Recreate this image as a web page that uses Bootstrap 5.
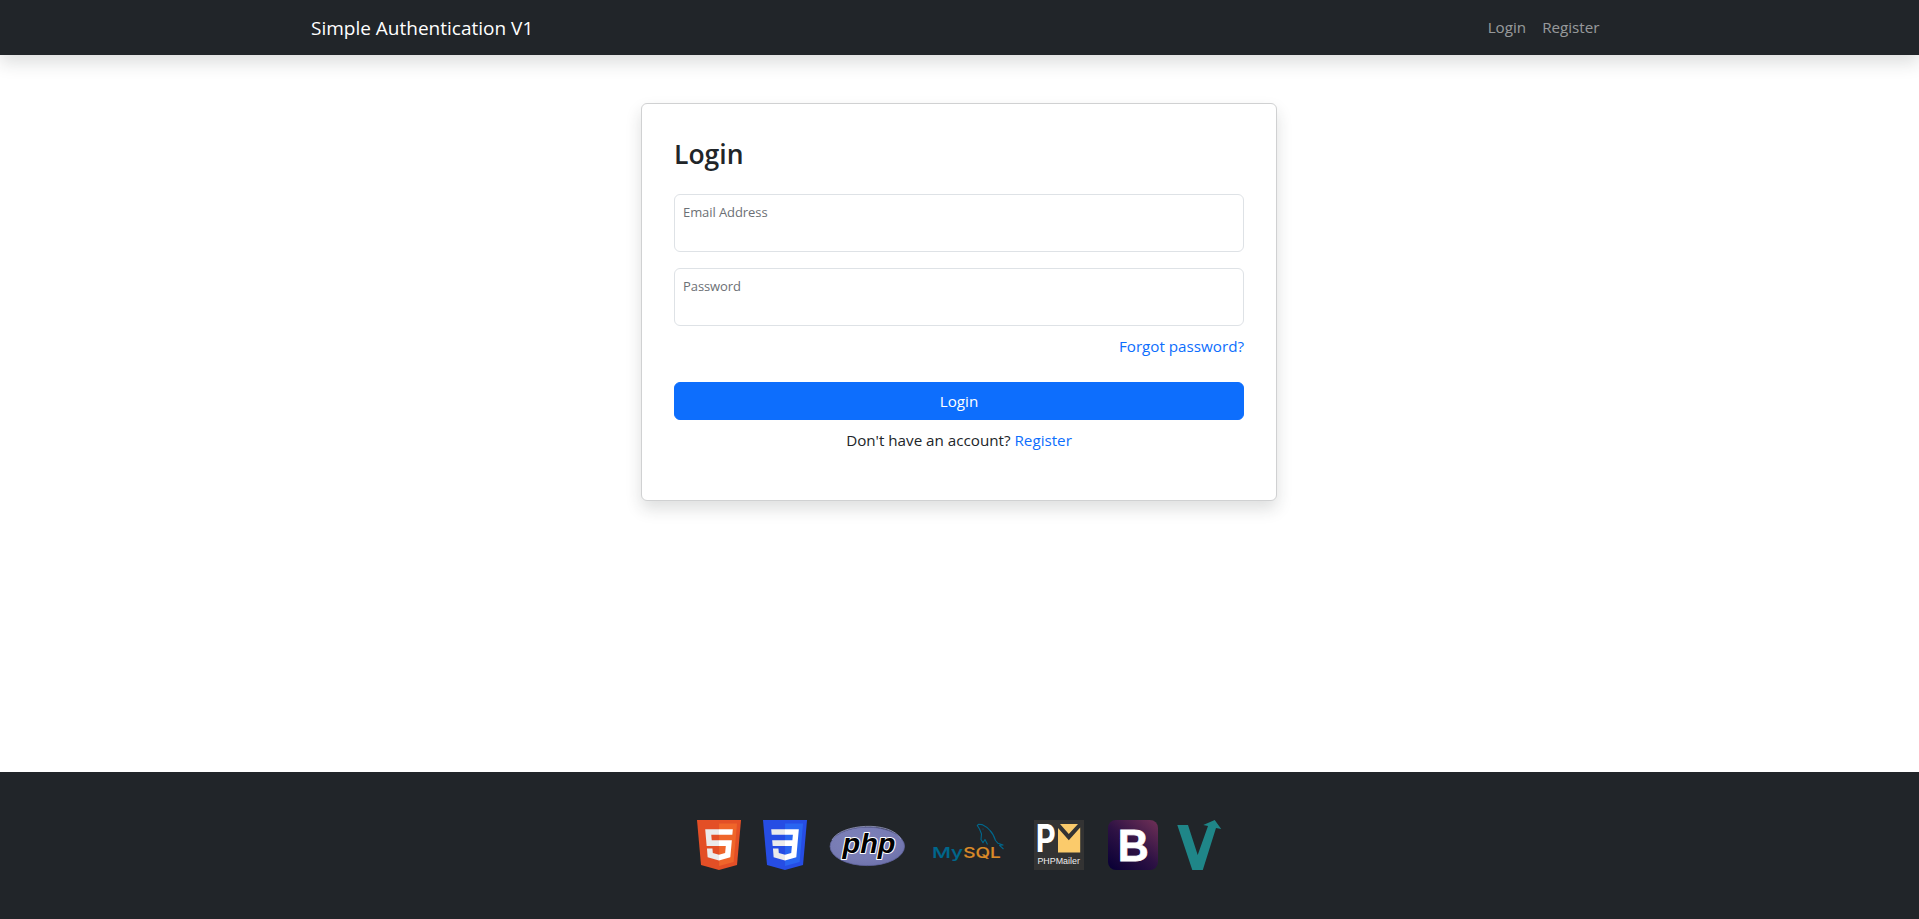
<!DOCTYPE html>
<html lang="en">
<head>
<meta charset="utf-8">
<meta name="viewport" content="width=device-width, initial-scale=1">
<title>Simple Authentication V1</title>
<link href="https://cdn.jsdelivr.net/npm/bootstrap@5.3.0/dist/css/bootstrap.min.css" rel="stylesheet">
<style>
  body { font-family: "Open Sans", "Noto Sans", sans-serif; font-size: 15.2px; line-height: 24px; }
  .site-nav { height: 55px; }
  .site-nav .navbar-brand { font-size: 19px; margin-left: -.5px; }
  .site-nav .navbar-nav { padding-bottom: 1px; }
  .login-title { font-size: 26.5px; line-height: 34px; margin: 9px 0 23px; font-weight: 600; }
  .login-card { height: 398px; border-color: #d0d1d2; margin-left: -.5px; margin-right: .5px; }
  .login-card .form-control { border-color: #dee2e6; height: 58px; }
  .login-card .form-floating > label { font-size: 13px; letter-spacing: -.08px; padding: 5px 8px; color: #6c7075; opacity: 1 !important; transform: none !important; line-height: 24px; }
  .login-card .btn { font-size: 15.2px; line-height: 24px; }
  .site-footer { height: 147px; padding-top: 48px; }
  .site-footer svg { overflow: visible; }
</style>
</head>
<body class="d-flex flex-column min-vh-100 bg-white">
<nav class="site-nav navbar navbar-expand navbar-dark bg-dark shadow py-0">
  <div class="container">
    <a class="navbar-brand" href="#">Simple Authentication V1</a>
    <div class="navbar-nav">
      <a class="nav-link" href="#">Login</a>
      <a class="nav-link" href="#">Register</a>
    </div>
  </div>
</nav>

<main class="container flex-grow-1 pt-5">
  <div class="row justify-content-center">
    <div class="col-6">
      <div class="login-card card shadow">
        <form class="card-body p-0 mx-auto w-100 px-4">
          <div class="px-2 pt-4">
            <h3 class="login-title">Login</h3>
            <div class="form-floating mb-3">
              <input type="email" class="form-control" id="email">
              <label for="email">Email Address</label>
            </div>
            <div class="form-floating mb-2">
              <input type="password" class="form-control" id="password">
              <label for="password">Password</label>
            </div>
            <div class="text-end mb-4"><a class="text-decoration-none" href="#">Forgot password?</a></div>
            <button type="button" class="btn btn-primary w-100 mb-2">Login</button>
            <p class="text-center mb-0">Don't have an account? <a class="text-decoration-none" href="#">Register</a></p>
          </div>
        </form>
      </div>
    </div>
  </div>
</main>

<footer class="site-footer bg-dark d-flex justify-content-center align-items-start">
  <svg width="58" height="50" viewBox="694 820 58 50">
    <g transform="translate(697 820) scale(.09765) translate(-30 0)">
      <path fill="#e34f26" d="M71 460 30 0H481L440 460 255 512z"/>
      <path fill="#ef652a" d="M256 472 405 431 440 37H256z"/>
      <path fill="#ebebeb" d="M256 208H181L176 150H256V94H114L129 265H256zM256 355 192 338 188 293H132L139 382 255 414h1z"/>
      <path fill="#fff" d="M255 208V265H325L318 338 255 355V414L371 382 387 208zM255 94V150H392L397 94z"/>
    </g>
  </svg>
  <svg width="66" height="50" viewBox="752 820 66 50">
    <g transform="translate(763 820) scale(.09765) translate(-30 0)">
      <path fill="#264de4" d="M71 460 30 0H481L440 460 255 512z"/>
      <path fill="#2965f1" d="M256 472 405 431 440 37H256z"/>
      <path fill="#ebebeb" d="M124 208 129 265H256V208zM256 94H114L119 150H256zM256 355 192 338 188 293H132L139 382 255 414h1z"/>
      <path fill="#fff" d="M255 414 371 382 397 94H255V150H336L331 208H255V265H326L319 338 255 355z"/>
    </g>
  </svg>
  <svg width="101" height="50" viewBox="818 820 101 50">
    <defs><radialGradient id="phpFill" cx=".4" cy=".35" r=".8"><stop offset="0" stop-color="#7d82b9"/><stop offset=".6" stop-color="#777bb3"/><stop offset="1" stop-color="#6a6ea8"/></radialGradient></defs>
    <ellipse cx="867.3" cy="846.4" rx="37.2" ry="19.2" fill="url(#phpFill)" stroke="#6266a0" stroke-width=".8"/>
    <path d="M832 840C840 824 890 820 901 839" fill="none" stroke="#9a9ec8" stroke-width=".8"/>
    <text x="842.5" y="852.6" font-family="Liberation Sans, sans-serif" font-size="27" font-weight="700" font-style="italic" textLength="53" lengthAdjust="spacingAndGlyphs" stroke="#fff" stroke-width="2" stroke-linejoin="round" paint-order="stroke">php</text>
  </svg>
  <svg width="101" height="50" viewBox="919 820 101 50">
    <g font-family="Inter, sans-serif" font-size="15" font-weight="500" stroke-width=".15">
      <text x="932" y="857.6" fill="#00678c" stroke="#00678c" textLength="31" lengthAdjust="spacingAndGlyphs">My</text>
      <text x="963.3" y="857.6" fill="#d98a28" stroke="#d98a28" textLength="37.5" lengthAdjust="spacingAndGlyphs">SQL</text>
    </g>
    <path d="M987.5 844.5 985 839.5 983 842.8 981 839.5 981.5 834 979.5 829 977.3 825.5 978.5 824.3 982 824.6Q987 827 990 830.5 993.5 834 995.5 840.5L998 843.3 1003 845 999.5 845.3 1003.5 849" fill="none" stroke="#00678c" stroke-width="1.1" stroke-linejoin="round"/>
    <circle cx="983" cy="829" r=".5" fill="#00678c"/>
  </svg>
  <svg width="76" height="50" viewBox="1020 820 76 50">
    <path fill="#333" d="M1034 820h50v50h-50z"/>
    <text x="1035.8" y="852.4" fill="#fff" font-family="Inter, sans-serif" font-size="38.5" font-weight="700" textLength="20" lengthAdjust="spacingAndGlyphs">P</text>
    <path fill="#fbcb6b" d="M1060 824H1078L1068.8 834zM1058 828 1068.8 840.3 1080.2 827.4V852.6H1058z"/>
    <text x="1037.4" y="864.4" fill="#eee" font-family="Liberation Sans, sans-serif" font-size="8.6" textLength="42.5" lengthAdjust="spacingAndGlyphs">PHPMailer</text>
  </svg>
  <svg width="72" height="50" viewBox="1096 820 72 50">
    <defs><linearGradient id="bsFill" x1=".1" y1="1" x2=".9" y2="0"><stop offset="0" stop-color="#0a0036"/><stop offset=".5" stop-color="#2e1244"/><stop offset="1" stop-color="#6a2e55"/></linearGradient></defs>
    <rect x="1108" y="820" width="50" height="50" rx="8" fill="url(#bsFill)"/>
    <text x="1117.8" y="860.6" fill="#fff" font-family="Liberation Sans, sans-serif" font-size="45" font-weight="700" textLength="31" lengthAdjust="spacingAndGlyphs" stroke="#fff" stroke-width=".8">B</text>
  </svg>
  <svg width="57" height="50" viewBox="1168 820 57 50">
    <path fill="#1f8688" d="M1177.3 825H1188L1197.7 855 1208 826 1203.3 825 1214.7 820 1221.2 829 1216 828 1202.8 870H1192.3z"/>
  </svg>
</footer>
<script src="https://cdn.jsdelivr.net/npm/bootstrap@5.3.0/dist/js/bootstrap.bundle.min.js"></script>
</body>
</html>
